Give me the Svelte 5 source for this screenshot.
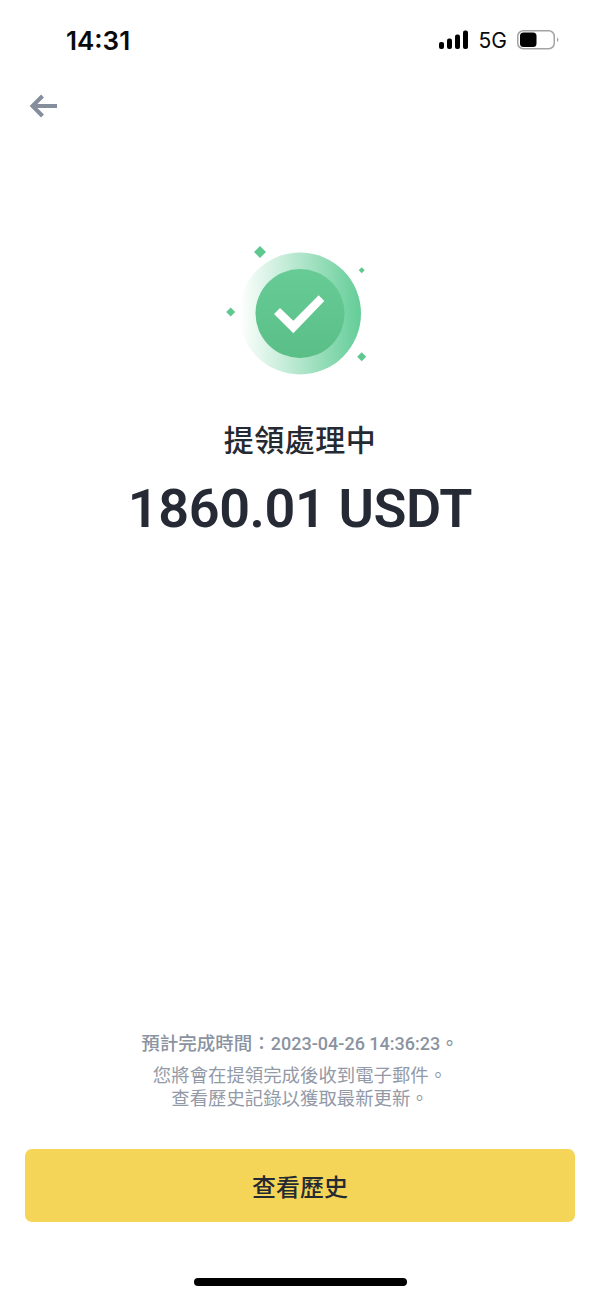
<script>
	const notes = ['您將會在提領完成後收到電子郵件。', '查看歷史記錄以獲取最新更新。']
	const sparkles = [
		{ x: 50, y: 22, r: 6 },
		{ x: 151.7, y: 40.3, r: 3 },
		{ x: 20.7, y: 82, r: 4.5 },
		{ x: 151.7, y: 126.7, r: 4.5 }
	]
	const diamond = ({ x, y, r }) => `${x},${y - r} ${x + r},${y} ${x},${y + r} ${x - r},${y}`
</script>

<div class="page" lang="zh-Hant-TW">
	<header class="status">
		<span class="time">14:31</span>
		<div class="indicators">
			<svg class="signal" width="30" height="20" viewBox="0 0 30 20" aria-hidden="true">
				<rect x="0" y="12" width="5" height="7" rx="2" />
				<rect x="8" y="8.5" width="5" height="10.5" rx="2" />
				<rect x="16" y="4.5" width="5" height="14.5" rx="2" />
				<rect x="24" y="0.5" width="5" height="18.5" rx="2" />
			</svg>
			<span class="network">5G</span>
			<svg class="battery" width="42" height="20" viewBox="0 0 42 20" aria-hidden="true">
				<rect x="0.75" y="0.75" width="36.5" height="18" rx="5.5" fill="none" stroke="#a3a3a3" stroke-width="1.5" />
				<rect x="3" y="2.500" width="16.500" height="14.500" rx="3.500" fill="#000" />
				<path d="M40 7.500v4.500c.9-.4 1.400-1.200 1.400-2.200S40.900 7.900 40 7.500z" fill="#a3a3a3" />
			</svg>
		</div>
	</header>

	<nav class="nav">
		<svg width="30" height="26" viewBox="0 0 30 26" aria-hidden="true">
			<path d="M28 13H4M13.500 3 3.500 13l10 10" fill="none" stroke="#848e9c" stroke-width="4" />
		</svg>
	</nav>

	<main class="result">
		<svg class="badge" width="180" height="160" viewBox="0 0 180 160" aria-hidden="true">
			<defs>
				<linearGradient id="ring" x1="0" x2="1" y1="0" y2="0">
					<stop offset="0" stop-color="#52c78c" stop-opacity="0" />
					<stop offset="1" stop-color="#52c78c" stop-opacity="0.9" />
				</linearGradient>
				<linearGradient id="disc" x1="0" x2="0" y1="0" y2="1">
					<stop offset="0" stop-color="#66cb95" />
					<stop offset="1" stop-color="#5abf87" />
				</linearGradient>
			</defs>
			<circle cx="90" cy="83.500" r="61" fill="url(#ring)" />
			<circle cx="90" cy="83.500" r="44.500" fill="url(#disc)" />
			<polygon points="64,84 70,78 83.300,90.700 108.700,65.300 114.300,71 83.300,103.300" fill="#fff" />
			{#each sparkles as s}
				<polygon points={diamond(s)} fill="#5ec88f" />
			{/each}
		</svg>
		<h1 class="title">提領處理中</h1>
		<p class="amount">1860.01 USDT</p>
	</main>

	<footer class="footer">
		<p class="eta">預計完成時間：<span class="when">2023-04-26 14:36:23</span>。</p>
		<div class="notes">
			{#each notes as note}
				<p>{note}</p>
			{/each}
		</div>
		<button class="history" type="button">查看歷史</button>
		<div class="home-bar"></div>
	</footer>
</div>

<style>
	:global(body) {
		background: #fff;
	}

	.page {
		display: flex;
		flex-direction: column;
		height: 1298px;
		overflow: hidden;
		background: #fff;
		font-family: Roboto, "Noto Sans CJK TC", sans-serif;
		color: #1e2329;
		text-spacing-trim: space-all;
	}

	.status {
		display: flex;
		justify-content: space-between;
		align-items: center;
		height: 30px;
		padding: 25px 40px 0 66px;
	}

	.time {
		font-family: Inter, sans-serif;
		font-size: 26px;
		font-weight: 600;
		color: #0a0a0a;
	}

	.indicators {
		display: flex;
		align-items: center;
		margin-right: 1px;
	}

	.signal {
		fill: #000;
		margin-right: 10px;
	}

	.network {
		font-family: Inter, sans-serif;
		font-size: 21px;
		color: #0a0a0a;
		margin-right: 10px;
	}

	.nav {
		display: flex;
		height: 26px;
		padding: 38px 0 0 29px;
	}

	.result {
		display: flex;
		flex: 1;
		flex-direction: column;
		align-items: center;
		padding-top: 111px;
	}

	.badge {
		display: block;
	}

	.title {
		margin: 31px 0 0;
		font-size: 30px;
		font-weight: 500;
		line-height: 40px;
		letter-spacing: 0.5px;
		color: #252a32;
	}

	.amount {
		margin: 16px 0 0;
		font-size: 54px;
		font-weight: 600;
		line-height: 64px;
		letter-spacing: -0.4px;
		color: #252a35;
	}

	.footer {
		display: flex;
		flex-direction: column;
		align-items: center;
		padding: 0 25px 12px;
	}

	.eta {
		margin: 0;
		font-size: 18.5px;
		font-weight: 500;
		line-height: 24px;
		color: #8b93a1;
	}

	.when {
		font-size: 18px;
	}

	.notes {
		margin-top: 8px;
		font-size: 18.4px;
		line-height: 23px;
		color: #939aa7;
		text-align: center;
	}

	.notes p {
		margin: 0;
	}

	.history {
		width: 100%;
		height: 73px;
		margin-top: 39px;
		border: none;
		border-radius: 7px;
		background: #f5d558;
		font-family: inherit;
		font-size: 24px;
		font-weight: 500;
		color: #252a32;
	}

	.home-bar {
		width: 213px;
		height: 8px;
		margin-top: 56px;
		border-radius: 4px;
		background: #000;
	}
</style>
